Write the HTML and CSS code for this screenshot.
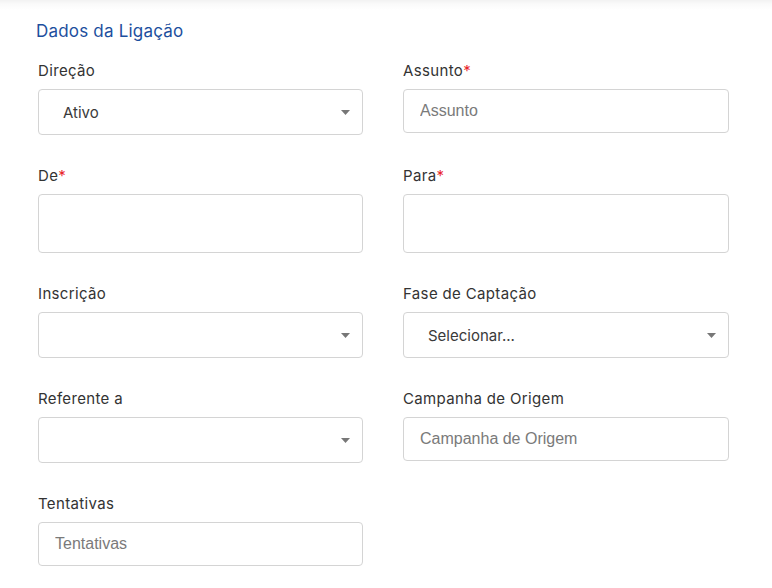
FILE: index.html
```html
<!DOCTYPE html>
<html lang="pt">
<head>
<meta charset="utf-8">
<title>Dados da Ligação</title>
<link rel="stylesheet" href="styles.css">
</head>
<body>
<div class="topshade"></div>
<section class="panel">
  <h2 class="title">Dados da Ligação</h2>
  <div class="grid">
    <div class="field">
      <label class="label">Direção</label>
      <div class="select"><span class="value">Ativo</span><svg class="caret" width="9" height="5" viewBox="0 0 9 5"><path d="M0 0h9L4.5 5z" fill="#777"/></svg></div>
    </div>
    <div class="field">
      <label class="label">Assunto<span class="req">*</span></label>
      <input class="input" type="text" placeholder="Assunto">
    </div>
    <div class="field">
      <label class="label">De<span class="req">*</span></label>
      <input class="input tall" type="text">
    </div>
    <div class="field">
      <label class="label">Para<span class="req">*</span></label>
      <input class="input tall" type="text">
    </div>
    <div class="field">
      <label class="label">Inscrição</label>
      <div class="select"><span class="value"></span><svg class="caret" width="9" height="5" viewBox="0 0 9 5"><path d="M0 0h9L4.5 5z" fill="#777"/></svg></div>
    </div>
    <div class="field">
      <label class="label">Fase de Captação</label>
      <div class="select"><span class="value">Selecionar...</span><svg class="caret" width="9" height="5" viewBox="0 0 9 5"><path d="M0 0h9L4.5 5z" fill="#777"/></svg></div>
    </div>
    <div class="field">
      <label class="label">Referente a</label>
      <div class="select"><span class="value"></span><svg class="caret" width="9" height="5" viewBox="0 0 9 5"><path d="M0 0h9L4.5 5z" fill="#777"/></svg></div>
    </div>
    <div class="field">
      <label class="label">Campanha de Origem</label>
      <input class="input" type="text" placeholder="Campanha de Origem">
    </div>
    <div class="field">
      <label class="label">Tentativas</label>
      <input class="input" type="text" placeholder="Tentativas">
    </div>
  </div>
</section>
</body>
</html>
```
FILE: styles.css
```css
* { box-sizing: border-box; }
html, body { margin: 0; padding: 0; background: #fff; }
body { font-family: Inter, "Noto Sans", sans-serif; color: #2b2b2b; }

.topshade {
  height: 10px;
  background: linear-gradient(to bottom, #f2f2f2 0%, #fafafa 40%, #ffffff 100%);
}

.panel { padding: 10px 0 0 38px; }

.title {
  margin: 0 0 18px -2px;
  font-size: 17px;
  line-height: 22px;
  font-weight: 400;
  letter-spacing: 0.2px;
  color: #1d4f9e;
}

.grid {
  display: grid;
  grid-template-columns: 325px 326px;
  column-gap: 40px;
  row-gap: 30px;
  align-items: start;
}

.field { display: flex; flex-direction: column; }

.label {
  font-size: 15px;
  line-height: 20px;
  margin: 1px 0 8px;
  letter-spacing: 0.35px;
  color: #333;
}
.req { color: #e8262b; }

.input {
  height: 44px;
  width: 100%;
  border: 1px solid #d4d4d4;
  border-radius: 4px;
  padding: 0 16px;
  font-family: "Liberation Sans", Arial, sans-serif;
  font-size: 16px;
  color: #333;
  background: #fff;
  outline: none;
}
.input::placeholder { color: #7a7a7a; }
.input.tall { height: 59px; }

.select {
  height: 46px;
  border: 1px solid #d4d4d4;
  border-radius: 4px;
  display: flex;
  align-items: center;
  justify-content: space-between;
  padding: 0 12px 0 24px;
  background: #fff;
}
.select .value {
  font-size: 15px;
  color: #3a3a3a;
}
.caret { display: block; }
```
